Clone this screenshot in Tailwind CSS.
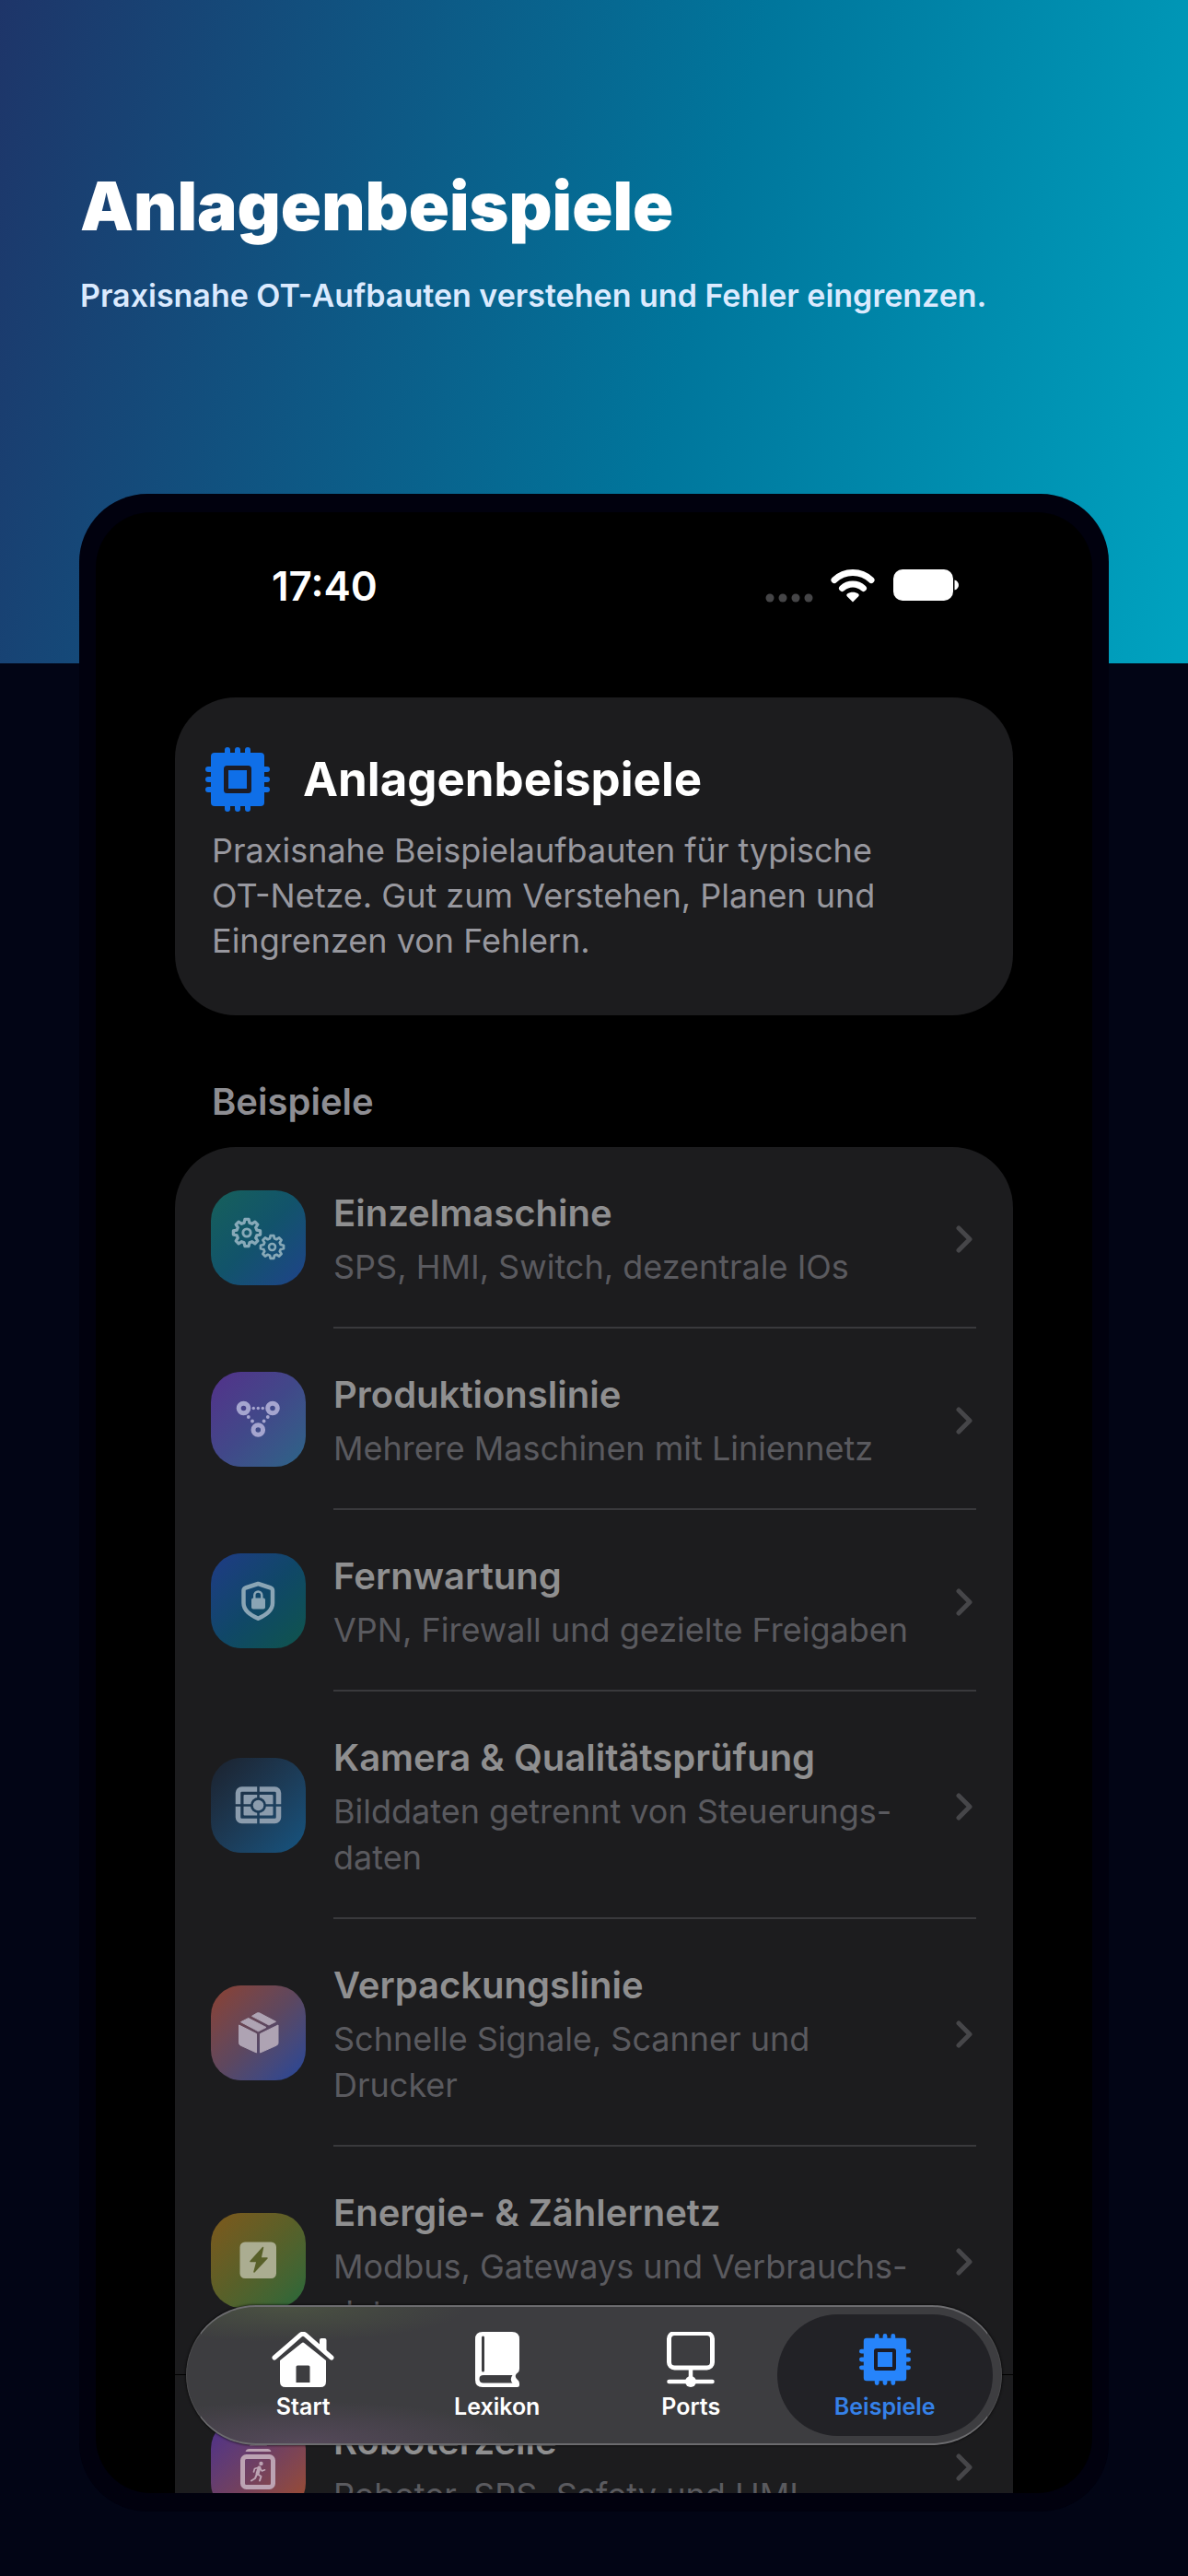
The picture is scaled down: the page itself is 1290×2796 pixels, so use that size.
<!DOCTYPE html>
<html lang="de">
<head>
  <meta charset="UTF-8" />
  <meta name="viewport" content="width=device-width, initial-scale=1.0" />
  <title>Anlagenbeispiele</title>
  <script src="https://cdn.jsdelivr.net/npm/@tailwindcss/browser@4"></script>
</head>
<body class="bg-[#020515] font-['Inter','Liberation_Sans',sans-serif] text-white">

  <!-- Shared shapes -->
  <svg class="hidden" aria-hidden="true">
    <symbol id="chip" viewBox="0 0 70 70">
      <path d="M24 3v64M35 3v64M46 3v64M3 24h64M3 35h64M3 46h64" stroke="currentColor" stroke-width="6" stroke-linecap="round" />
      <path fill="currentColor" fill-rule="evenodd" d="M10 6h50a4 4 0 0 1 4 4v50a4 4 0 0 1-4 4H10a4 4 0 0 1-4-4V10a4 4 0 0 1 4-4z" />
      <rect x="22.500" y="22.500" width="25" height="25" rx="1" fill="none" stroke="#1c1c26" stroke-width="5" />
    </symbol>
    <symbol id="gear" viewBox="-115 -115 230 230" overflow="visible">
      <path d="M73.4-19.7L99-13.9V13.9L73.4 19.7L65.8 38L79.8 60.2L60.2 79.8L38 65.8L19.7 73.4L13.9 99H-13.9L-19.7 73.4L-38 65.8L-60.2 79.8L-79.8 60.2L-65.8 38L-73.4 19.7L-99 13.900V-13.9L-73.4-19.7L-65.8-38L-79.8-60.2L-60.2-79.8L-38-65.8L-19.7-73.4L-13.9-99H13.9L19.7-73.4L38-65.8L60.2-79.8L79.8-60.2L65.8-38Z" fill="none" stroke="currentColor" stroke-width="22" stroke-linejoin="round" />
      <circle r="28" fill="none" stroke="currentColor" stroke-width="20" />
    </symbol>
    <symbol id="chevron" viewBox="0 0 20 30">
      <path d="M3 3l12 12L3 27" fill="none" stroke="currentColor" stroke-width="5" stroke-linecap="round" stroke-linejoin="round" />
    </symbol>
  </svg>

  <div class="relative flex h-screen flex-col overflow-hidden">
    <div class="absolute inset-x-0 top-0 h-[720px] bg-[linear-gradient(104deg,#1e3569_0%,#00769c_57%,#00a3c0_100%)]"></div>

    <header class="relative px-[87px] pt-[180px]">
      <h1 class="text-[73px] leading-[88px] font-black">Anlagenbeispiele</h1>
      <p class="mt-[30px] text-[34px] leading-[46px] font-semibold text-[#dbeafe]">Praxisnahe OT-Aufbauten verstehen und Fehler eingrenzen.</p>
    </header>

    <!-- Phone -->
    <div class="relative mx-[86px] mt-48 mb-[70px] min-h-0 flex-1 rounded-[74px] bg-[#01010e] px-[18px] py-5">
      <div class="relative h-full overflow-hidden rounded-[60px] bg-black">

        <div class="flex h-[201px] items-start justify-between pt-[54px] pr-[145px] pl-[191px]">
          <span class="text-[44px] leading-[52px] font-semibold">17:40</span>
          <svg class="mt-[6px] h-10 w-[212px]" viewBox="0 0 212 40" fill="#fff" aria-hidden="true">
            <g fill="#454547">
              <circle cx="7" cy="33" r="4.500" /><circle cx="21" cy="33" r="4.500" /><circle cx="35" cy="33" r="4.500" /><circle cx="49" cy="33" r="4.500" />
            </g>
            <g fill="none" stroke="#fff" stroke-width="7" stroke-linecap="round">
              <path d="M77 13.500a29 29 0 0 1 40 0" />
              <path d="M85.500 22.500a17 17 0 0 1 23 0" />
            </g>
            <path d="M97 37.500l-6-6c-1-1-1-2 0-3 3.500-2.500 8.500-2.500 12 0 1 1 1 2 0 3z" />
            <rect x="141" y="2" width="65" height="34" rx="10" />
            <path d="M207.500 13.500c6 1.500 6 9.500 0 11z" />
          </svg>
        </div>

        <main class="px-[86px]">
          <section class="rounded-[66px] bg-[#1c1c1e] px-[40px] pt-[54px] pb-[56px]">
            <div class="-ml-[7px] flex items-center gap-9">
              <svg class="size-[70px] text-[#0f6fe8]" aria-hidden="true"><use href="#chip" /></svg>
              <h2 class="text-[51px] leading-[68px] font-bold">Anlagenbeispiele</h2>
            </div>
            <p class="mt-[18px] text-[36px] leading-[49px] text-[#98989f]">Praxisnahe Beispielaufbauten für typische<br />OT-Netze. Gut zum Verstehen, Planen und<br />Eingrenzen von Fehlern.</p>
          </section>

          <h3 class="mt-[67px] px-10 text-[40px] leading-[54px] font-semibold text-[#8e8e93]">Beispiele</h3>

          <ul class="mt-[22px] rounded-t-[66px] bg-[#1c1c1e] text-[#5a5a5f]">
            <li>
              <a href="#einzelmaschine" class="flex items-center gap-[30px] pl-[39px]">
                <svg class="size-[103px] shrink-0 rounded-[33px] bg-linear-to-br from-[#17605a] via-[#12536b] to-[#1f4289] text-[#87a9b8]" viewBox="0 0 103 103" aria-hidden="true">
                  <use href="#gear" x="22" y="29" width="34" height="34" />
                  <use href="#gear" x="52" y="47" width="29" height="29" />
                </svg>
                <div class="mr-10 flex flex-1 items-center justify-between border-b-2 border-[#39393c] pt-[45px] pb-10">
                  <div>
                    <h4 class="text-[40px] leading-[54px] font-semibold text-[#8f8f90]">Einzelmaschine</h4>
                    <p class="mt-[6px] text-[36px] leading-[50px]">SPS, HMI, Switch, dezentrale IOs</p>
                  </div>
                  <svg class="mr-[2px] h-[30px] w-5 shrink-0 text-[#464649]" aria-hidden="true"><use href="#chevron" /></svg>
                </div>
              </a>
            </li>
            <li>
              <a href="#produktionslinie" class="flex items-center gap-[30px] pl-[39px]">
                <svg class="size-[103px] shrink-0 rounded-[33px] bg-linear-to-br from-[#52308a] via-[#414889] to-[#2a6487] text-[#a5a5cf]" viewBox="0 0 103 103" aria-hidden="true">
                  <g fill="none" stroke="currentColor" stroke-width="5">
                    <circle cx="35.500" cy="39.500" r="5.300" /><circle cx="67" cy="39.500" r="5.300" /><circle cx="51.300" cy="63" r="5.300" />
                  </g>
                  <g fill="currentColor">
                    <circle cx="46.300" cy="39.500" r="1.700" /><circle cx="51.300" cy="39.500" r="1.700" /><circle cx="56.300" cy="39.500" r="1.700" />
                    <circle cx="40.800" cy="49" r="1.900" /><circle cx="45" cy="53.500" r="1.900" />
                    <circle cx="61.800" cy="49" r="1.900" /><circle cx="57.600" cy="53.500" r="1.900" />
                  </g>
                </svg>
                <div class="mr-10 flex flex-1 items-center justify-between border-b-2 border-[#39393c] pt-[45px] pb-10">
                  <div>
                    <h4 class="text-[40px] leading-[54px] font-semibold text-[#8f8f90]">Produktionslinie</h4>
                    <p class="mt-[6px] text-[36px] leading-[50px]">Mehrere Maschinen mit Liniennetz</p>
                  </div>
                  <svg class="mr-[2px] h-[30px] w-5 shrink-0 text-[#464649]" aria-hidden="true"><use href="#chevron" /></svg>
                </div>
              </a>
            </li>
            <li>
              <a href="#fernwartung" class="flex items-center gap-[30px] pl-[39px]">
                <svg class="size-[103px] shrink-0 rounded-[33px] bg-linear-to-br from-[#1f3a86] via-[#104768] to-[#11544b] text-[#8aa5b5]" viewBox="0 0 103 103" aria-hidden="true">
                  <path d="M51.300 33L65 37.500q2 .8 2 3V54c0 8-7 12.500-15.700 16.800C42.500 66.500 35.500 62 35.500 54V40.500q0-2.200 2-3z" fill="none" stroke="currentColor" stroke-width="4.500" stroke-linejoin="round" />
                  <rect x="44" y="48.500" width="15" height="12" rx="2" fill="currentColor" />
                  <path d="M47.300 49v-3.500a4 4 0 0 1 8 0V49" fill="none" stroke="currentColor" stroke-width="2.500" />
                </svg>
                <div class="mr-10 flex flex-1 items-center justify-between border-b-2 border-[#39393c] pt-[45px] pb-10">
                  <div>
                    <h4 class="text-[40px] leading-[54px] font-semibold text-[#8f8f90]">Fernwartung</h4>
                    <p class="mt-[6px] text-[36px] leading-[50px]">VPN, Firewall und gezielte Freigaben</p>
                  </div>
                  <svg class="mr-[2px] h-[30px] w-5 shrink-0 text-[#464649]" aria-hidden="true"><use href="#chevron" /></svg>
                </div>
              </a>
            </li>
            <li>
              <a href="#kamera" class="flex items-center gap-[30px] pl-[39px]">
                <svg class="size-[103px] shrink-0 rounded-[33px] bg-linear-to-br from-[#1b222e] to-[#145480] text-[#8b9cad]" viewBox="0 0 103 103" aria-hidden="true">
                  <mask id="finder">
                    <rect width="103" height="103" fill="#fff" />
                    <path d="M51.500 28v46M24 51.500h54" stroke="#000" stroke-width="2.600" />
                    <circle cx="51.500" cy="51.500" r="8.500" />
                  </mask>
                  <g mask="url(#finder)">
                    <rect x="29.500" y="34" width="44" height="34.500" rx="4" fill="none" stroke="currentColor" stroke-width="5.500" />
                    <rect x="35.500" y="40" width="32" height="22.500" rx="1" fill="currentColor" />
                  </g>
                  <circle cx="51.500" cy="51.500" r="5.800" fill="currentColor" />
                </svg>
                <div class="mr-10 flex flex-1 items-center justify-between border-b-2 border-[#39393c] pt-[45px] pb-10">
                  <div>
                    <h4 class="text-[40px] leading-[54px] font-semibold text-[#8f8f90]">Kamera &amp; Qualitätsprüfung</h4>
                    <p class="mt-[6px] text-[36px] leading-[50px]">Bilddaten getrennt von Steuerungs-<br />daten</p>
                  </div>
                  <svg class="mr-[2px] h-[30px] w-5 shrink-0 text-[#464649]" aria-hidden="true"><use href="#chevron" /></svg>
                </div>
              </a>
            </li>
            <li>
              <a href="#verpackungslinie" class="flex items-center gap-[30px] pl-[39px]">
                <svg class="size-[103px] shrink-0 rounded-[33px] bg-linear-to-br from-[#8c402f] via-[#5d475f] to-[#22459a] text-[#aea3b3]" viewBox="0 0 103 103" aria-hidden="true">
                  <g fill="currentColor" stroke="currentColor" stroke-width="1" stroke-linejoin="round">
                    <path d="M30.500 43L49.500 52.500V73L32 65q-1.500-1-1.500-2.500z" />
                    <path d="M73 43L53.500 52.500V73L71.500 65q1.500-1 1.500-2.500z" />
                    <path d="M32.500 39.700L40.700 35.500L60 45.500L51.500 49.800z" />
                    <path d="M44.500 33.300L50 30q1.500-.7 3 0L70.500 39.300L63 43z" />
                  </g>
                </svg>
                <div class="mr-10 flex flex-1 items-center justify-between border-b-2 border-[#39393c] pt-[45px] pb-10">
                  <div>
                    <h4 class="text-[40px] leading-[54px] font-semibold text-[#8f8f90]">Verpackungslinie</h4>
                    <p class="mt-[6px] text-[36px] leading-[50px]">Schnelle Signale, Scanner und<br />Drucker</p>
                  </div>
                  <svg class="mr-[2px] h-[30px] w-5 shrink-0 text-[#464649]" aria-hidden="true"><use href="#chevron" /></svg>
                </div>
              </a>
            </li>
            <li class="border-b border-black">
              <a href="#energie" class="flex items-center gap-[30px] pl-[39px]">
                <svg class="size-[103px] shrink-0 rounded-[33px] bg-linear-to-br from-[#7d581b] via-[#586029] to-[#23683a] text-[#abad91]" viewBox="0 0 103 103" aria-hidden="true">
                  <rect x="31.500" y="31.500" width="39.500" height="39.500" rx="5.500" fill="currentColor" />
                  <path d="M56.500 37.500L43 52.500H50L47 64L61 49H54z" fill="#586029" stroke="#586029" stroke-width="1.500" stroke-linejoin="round" />
                </svg>
                <div class="mr-10 flex flex-1 items-center justify-between pt-[45px] pb-[42px]">
                  <div>
                    <h4 class="text-[40px] leading-[54px] font-semibold text-[#8f8f90]">Energie- &amp; Zählernetz</h4>
                    <p class="mt-[6px] text-[36px] leading-[50px]">Modbus, Gateways und Verbrauchs-<br />daten</p>
                  </div>
                  <svg class="mr-[2px] h-[30px] w-5 shrink-0 text-[#464649]" aria-hidden="true"><use href="#chevron" /></svg>
                </div>
              </a>
            </li>
            <li>
              <a href="#roboterzelle" class="flex items-center gap-[30px] pl-[39px]">
                <svg class="size-[103px] shrink-0 rounded-[33px] bg-linear-to-br from-[#4c2d8e] via-[#714060] to-[#a04c22] text-[#bca3b3]" viewBox="0 0 103 103" aria-hidden="true">
                  <path d="M42 29.500q1-2 3-2h13q2 0 3 2zM37.500 36q1-3 4-3h20q3 0 4 3z" fill="currentColor" />
                  <rect x="34.500" y="41.500" width="33" height="33" rx="4" fill="none" stroke="currentColor" stroke-width="5" />
                  <g fill="none" stroke="currentColor" stroke-linecap="round" stroke-linejoin="round">
                    <path d="M52.500 53.500L50.500 60" stroke-width="4" />
                    <path d="M51 60.500L54.500 63L53 67.500M49.500 61.500L48 65L44 67.500" stroke-width="2" />
                    <path d="M46.500 58L47.500 54.500L52.500 53L55.500 57L58.500 55.800" stroke-width="1.700" />
                  </g>
                  <circle cx="54.500" cy="49" r="2.200" fill="currentColor" />
                </svg>
                <div class="mr-10 flex flex-1 items-center justify-between pt-[45px] pb-[42px]">
                  <div>
                    <h4 class="text-[40px] leading-[54px] font-semibold text-[#8f8f90]">Roboterzelle</h4>
                    <p class="mt-[6px] text-[36px] leading-[50px]">Roboter, SPS, Safety und HMI</p>
                  </div>
                  <svg class="mr-[2px] h-[30px] w-5 shrink-0 text-[#464649]" aria-hidden="true"><use href="#chevron" /></svg>
                </div>
              </a>
            </li>
          </ul>
        </main>

        <!-- Tab bar -->
        <nav class="absolute inset-x-[98px] bottom-[52px] grid h-[152px] grid-cols-4 rounded-full border-x border-y-2 border-x-[#4a4a4c] border-y-[#6c6c6f] bg-[#3d3d40] bg-[radial-gradient(ellipse_at_14%_100%,#55495a_0%,transparent_22%),radial-gradient(ellipse_at_12%_0%,#4a5142_0%,transparent_18%)] px-[21px] text-[25px] leading-7 font-semibold shadow-[0_0_3px_#000]">
          <a href="#start" class="flex flex-col items-center justify-center gap-[7px]">
            <svg class="h-[60px] w-[68px]" viewBox="0 0 68 60" aria-hidden="true">
              <path d="M3 28L31.500 3.200q2.500-2 5 0L65 28" fill="none" stroke="#fff" stroke-width="5" stroke-linecap="round" stroke-linejoin="round" />
              <path d="M52 9q0-2 2-2h3.500q2 0 2 2v14L52 16.500z" fill="#fff" />
              <path fill="#fff" fill-rule="evenodd" d="M9 31L32.500 12.200q1.500-1.200 3 0L59 31V54q0 6-6 6H15q-6 0-6-6zM26.500 38v17h15V38q0-1.500-1.500-1.500H28q-1.500 0-1.500 1.500z" />
            </svg>
            <span>Start</span>
          </a>
          <a href="#lexikon" class="flex flex-col items-center justify-center gap-[7px]">
            <svg class="h-[60px] w-12" viewBox="0 0 48 60" aria-hidden="true">
              <path fill="#fff" fill-rule="evenodd" d="M8 0H40q8 0 8 8V40q0 3-2 4.500c-3 2-3 5 0 7.500q2 1.500 2 4v1.500q0 2.500-2.500 2.500H8q-8 0-8-8V8Q0 0 8 0zM9 47q-4.500 0-4.500 4.200T9 55.500H40.500q-3.500-4 0-8.500z" />
              <path d="M8.500 6v36" stroke="#3d3d40" stroke-width="3" stroke-linecap="round" />
            </svg>
            <span>Lexikon</span>
          </a>
          <a href="#ports" class="flex flex-col items-center justify-center gap-[7px]">
            <svg class="h-[60px] w-[52px]" viewBox="0 0 52 60" fill="none" stroke="#fff" aria-hidden="true">
              <rect x="2.500" y="1.500" width="47" height="37.500" rx="6" stroke-width="5" />
              <path d="M26 39v12" stroke-width="4.500" />
              <path d="M2.500 54h47" stroke-width="4.500" stroke-linecap="round" />
              <circle cx="26" cy="54" r="6" fill="#fff" stroke="none" />
            </svg>
            <span>Ports</span>
          </a>
          <a href="#beispiele" aria-current="page" class="relative flex flex-col items-center justify-center gap-[7px] text-[#3581e8]">
            <span class="absolute -inset-x-3 inset-y-2 rounded-full bg-[#222226]"></span>
            <svg class="relative my-[2px] size-14 text-[#2684fb]" aria-hidden="true"><use href="#chip" /></svg>
            <span class="relative">Beispiele</span>
          </a>
        </nav>
      </div>
    </div>
  </div>
</body>
</html>
